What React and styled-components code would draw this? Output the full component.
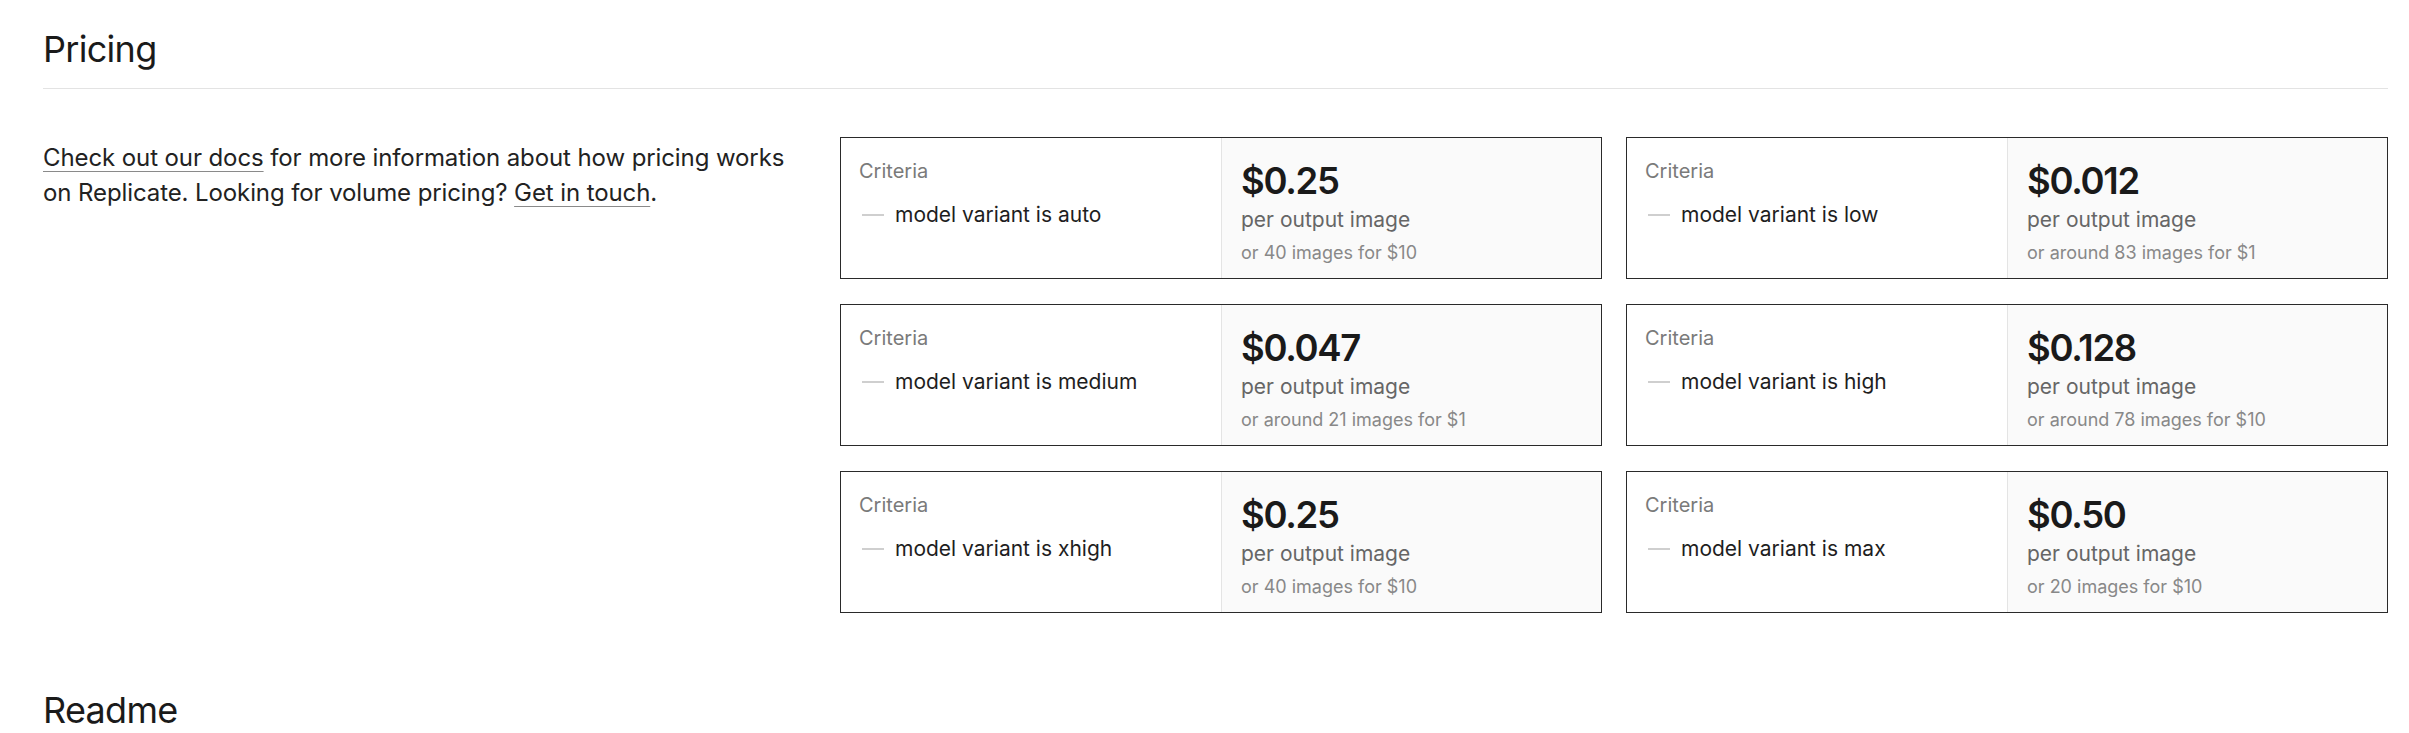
import React from 'react';
import styled, { createGlobalStyle } from 'styled-components';

const GlobalStyle = createGlobalStyle`
  html, body {
    margin: 0;
    padding: 0;
    background: #ffffff;
  }
  body {
    font-family: Inter, "Noto Sans", "Liberation Sans", sans-serif;
    color: #1f1f1f;
    -webkit-font-smoothing: antialiased;
  }
`;

const prices = [
  { variant: 'auto', price: '$0.25', note: 'or 40 images for $10' },
  { variant: 'low', price: '$0.012', note: 'or around 83 images for $1' },
  { variant: 'medium', price: '$0.047', note: 'or around 21 images for $1' },
  { variant: 'high', price: '$0.128', note: 'or around 78 images for $10' },
  { variant: 'xhigh', price: '$0.25', note: 'or 40 images for $10' },
  { variant: 'max', price: '$0.50', note: 'or 20 images for $10' },
];

const Page = styled.div`
  padding: 27px 21px 0 43px;
`;

const Section = styled.section`
  margin-bottom: ${props => (props.last ? '0' : '75px')};
`;

const SectionTitle = styled.h2`
  margin: 0;
  font-size: 36px;
  line-height: 44px;
  font-weight: 400;
  letter-spacing: -0.7px;
  color: #1a1a1a;
  padding-bottom: ${props => (props.ruled ? '17px' : '0')};
  border-bottom: ${props => (props.ruled ? '1px solid #e3e3e3' : 'none')};
`;

const PricingBody = styled.div`
  display: grid;
  grid-template-columns: minmax(0, 749fr) minmax(0, 1548fr);
  column-gap: 48px;
  margin-top: 48px;
`;

const Intro = styled.p`
  margin: 0;
  padding-top: 3px;
  font-size: 24px;
  line-height: 35px;
  color: #222;
  letter-spacing: -0.1px;
`;

const TextLink = styled.a`
  color: inherit;
  text-decoration: underline;
  text-decoration-color: #8a8a8a;
  text-decoration-thickness: 1px;
  text-underline-offset: 5px;
`;

const CardGrid = styled.div`
  display: grid;
  grid-template-columns: 1fr 1fr;
  gap: 25px 24px;
`;

const Card = styled.div`
  display: grid;
  grid-template-columns: 1fr 1fr;
  height: 142px;
  box-sizing: border-box;
  border: 1px solid #2a2a2a;
`;

const CriteriaPane = styled.div`
  padding: 18px 18px;
  background: #ffffff;
`;

const CriteriaLabel = styled.div`
  font-size: 20px;
  line-height: 30px;
  color: #7a7a7a;
`;

const CriteriaRow = styled.div`
  display: flex;
  align-items: center;
  gap: 11px;
  margin-top: 14px;
  font-size: 21px;
  line-height: 30px;
  color: #1e1e1e;
`;

const Dash = styled.span`
  display: block;
  width: 22px;
  height: 2px;
  margin-left: 3px;
  background: #cfcfcf;
  flex-shrink: 0;
`;

const PricePane = styled.div`
  padding: 20px 19px 0;
  background: #fafafa;
  border-left: 1px solid #e4e4e4;
`;

const Price = styled.div`
  font-size: 36.5px;
  line-height: 46px;
  font-weight: 600;
  letter-spacing: -1.3px;
  color: #1a1a1a;
`;

const Unit = styled.div`
  margin-top: 0;
  font-size: 21px;
  line-height: 32px;
  color: #666666;
`;

const Note = styled.div`
  margin-top: 3px;
  font-size: 18px;
  line-height: 28px;
  color: #888888;
`;

const PriceCard = ({ variant, price, note }) => (
  <Card>
    <CriteriaPane>
      <CriteriaLabel>Criteria</CriteriaLabel>
      <CriteriaRow>
        <Dash />
        <span>model variant is {variant}</span>
      </CriteriaRow>
    </CriteriaPane>
    <PricePane>
      <Price>{price}</Price>
      <Unit>per output image</Unit>
      <Note>{note}</Note>
    </PricePane>
  </Card>
);

export default function App() {
  return (
    <>
      <GlobalStyle />
      <Page>
        <Section>
          <SectionTitle ruled>Pricing</SectionTitle>
          <PricingBody>
            <Intro>
              <TextLink href="#docs">Check out our docs</TextLink> for more information about how pricing
              works on Replicate. Looking for volume pricing? <TextLink href="#contact">Get in touch</TextLink>.
            </Intro>
            <CardGrid>
              {prices.map(p => (
                <PriceCard key={p.variant} {...p} />
              ))}
            </CardGrid>
          </PricingBody>
        </Section>
        <Section last>
          <SectionTitle>Readme</SectionTitle>
        </Section>
      </Page>
    </>
  );
}
